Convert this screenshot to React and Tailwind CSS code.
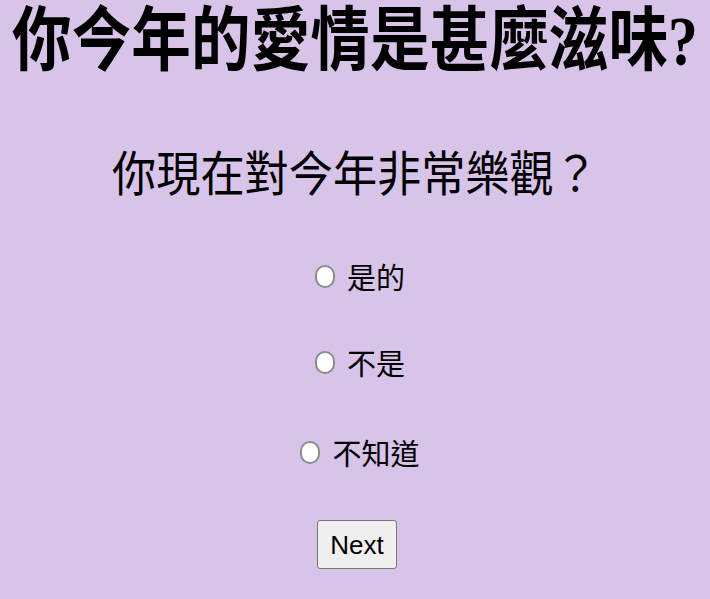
import React, { useState } from 'react';

const options = ['是的', '不是', '不知道'];

const App = () => {
  const [answer, setAnswer] = useState('');

  return (
    <div className="min-h-[599px] w-full overflow-hidden bg-[#d7c4e8] text-black">
      {/* Title */}
      <h1 className="-mx-[50px] scale-x-[0.852] whitespace-nowrap text-center text-[70px] leading-none font-bold [font-family:'Noto_Sans_CJK_TC',sans-serif]">
        你今年的愛情是甚麼滋味
        <span className="[font-family:'Liberation_Serif',serif]">?</span>
      </h1>

      {/* Question */}
      <h2 className="mt-[69px] scale-x-[0.92] whitespace-nowrap text-center text-[48px] leading-none font-normal [font-family:'Noto_Sans_CJK_TC',sans-serif]">
        你現在對今年非常樂觀？
      </h2>

      {/* Options */}
      <div className="mt-[67px] flex flex-col items-center pl-[10px]">
        {options.map((opt, i) => (
          <label
            key={opt}
            className={`flex h-[30px] items-center gap-[12px] cursor-pointer ${
              i === 0 ? '' : i === 1 ? 'mt-[56px]' : 'mt-[60px]'
            }`}
          >
            <input
              type="radio"
              name="q1"
              checked={answer === opt}
              onChange={() => setAnswer(opt)}
              className="h-[23px] w-[20px] appearance-none rounded-full border-2 border-[#8c8c8c] bg-white checked:bg-[#1a73e8]"
            />
            <span className="text-[29px] leading-none [font-family:'Noto_Sans_CJK_TC',sans-serif]">
              {opt}
            </span>
          </label>
        ))}
      </div>

      {/* Next button */}
      <div className="mt-[53px] flex justify-center pl-[4px]">
        <button className="h-[49px] w-[80px] rounded-[3px] border border-[#767676] bg-[#efefef] text-[26px] leading-none [font-family:'Liberation_Sans',sans-serif]">
          Next
        </button>
      </div>
    </div>
  );
};

export default App;
